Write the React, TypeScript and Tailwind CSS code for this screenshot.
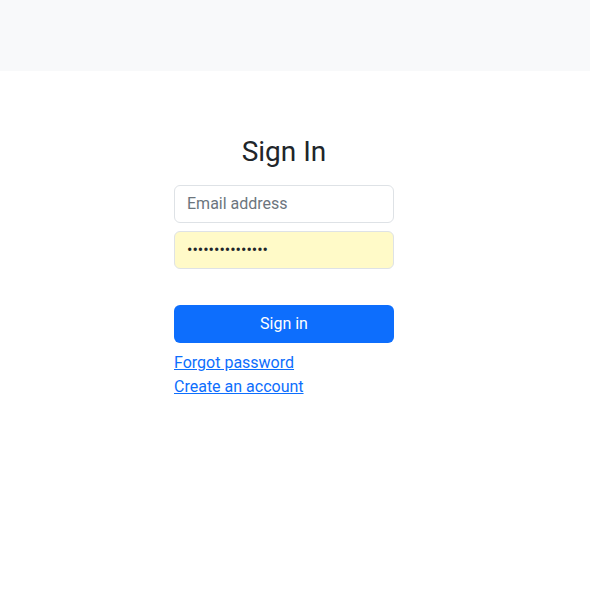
import { useState } from 'react';

const App: React.FC = () => {
  const [email, setEmail] = useState<string>('');
  const [password, setPassword] = useState<string>('abcdefghijklmno');

  return (
    <div className="min-h-screen bg-white text-[#212529] font-['Roboto','Liberation_Sans',sans-serif]">
      {/* header */}
      <div className="h-[71px] bg-[#f8f9fa]" />

      <div className="flex justify-center pt-[64px] pr-[22px]">
        <form className="w-[220px] flex flex-col" onSubmit={(e) => e.preventDefault()}>
          <h3 className="text-[28px] leading-[1.2] font-normal text-center mb-[16px]">Sign In</h3>
          <input
            type="email"
            placeholder="Email address"
            value={email}
            onChange={(e) => setEmail(e.target.value)}
            className="h-[38px] px-3 text-base border border-[#dee2e6] rounded-[6px] bg-white placeholder:text-[#6c757d] outline-none"
          />
          <input
            type="password"
            value={password}
            onChange={(e) => setPassword(e.target.value)}
            className="mt-2 h-[38px] px-3 text-base border border-[#dee2e6] rounded-[6px] bg-[#fffac8] text-[#212529] outline-none"
          />
          <button
            type="submit"
            className="mt-[36px] h-[38px] rounded-[6px] bg-[#0d6efd] text-white text-base"
          >
            Sign in
          </button>
          <div className="mt-[8px] flex flex-col items-start text-base leading-6">
            <a href="#" className="text-[#0d6efd] underline">Forgot password</a>
            <a href="#" className="text-[#0d6efd] underline">Create an account</a>
          </div>
        </form>
      </div>
    </div>
  );
};

export default App;
